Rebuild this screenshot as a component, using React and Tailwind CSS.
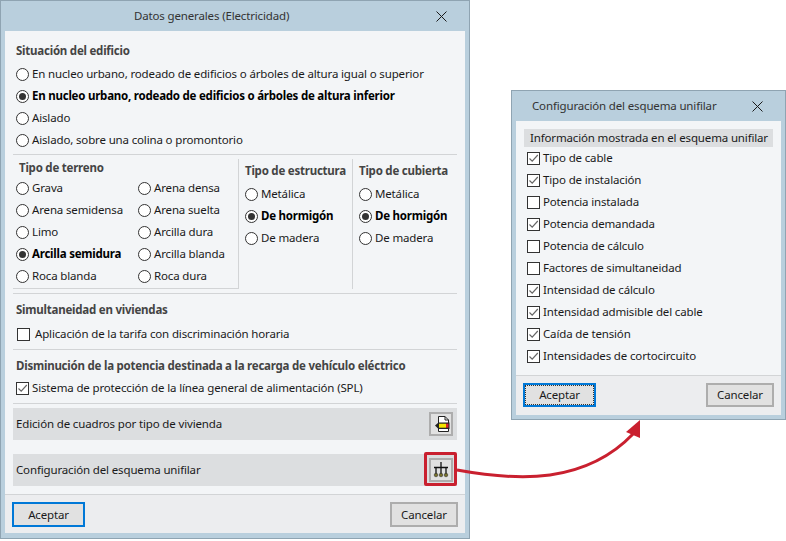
import React from 'react';

const font = { fontFamily: '"Noto Sans", sans-serif' };

function CloseIcon() {
  return (
    <svg width="11" height="11" viewBox="0 0 11 11" className="shrink-0">
      <path d="M0.5 0.5L10.5 10.5M10.5 0.5L0.5 10.5" stroke="#1a1a1a" strokeWidth="1" fill="none" />
    </svg>
  );
}

function Radio({ label, checked = false, className = '' }) {
  return (
    <div className={`flex h-[22px] items-center ${className}`}>
      <span className="flex h-[13px] w-[13px] shrink-0 items-center justify-center rounded-full border border-[#333333] bg-white">
        {checked && <span className="h-[7px] w-[7px] rounded-full bg-[#333333]" />}
      </span>
      <span className={`ml-[3px] whitespace-nowrap ${checked ? 'font-bold tracking-[-0.23px] text-black' : ''}`}>{label}</span>
    </div>
  );
}

function Check({ label, checked = false, textGap = 'ml-[3px]', className = '' }) {
  return (
    <div className={`flex h-[22px] items-center ${className}`}>
      <span className="flex h-[13px] w-[13px] shrink-0 items-center justify-center border border-[#333333] bg-white">
        {checked && (
          <svg width="11" height="11" viewBox="0 0 11 11">
            <path d="M1.5 5.5L4.2 8.2L9.8 2" stroke="#666666" strokeWidth="1.2" fill="none" />
          </svg>
        )}
      </span>
      <span className={`${textGap} whitespace-nowrap`}>{label}</span>
    </div>
  );
}

function Heading({ children, className = '' }) {
  return <div className={`flex items-center whitespace-nowrap font-bold tracking-[-0.23px] text-[#444444] ${className}`}>{children}</div>;
}

function Separator({ className = '' }) {
  return <div className={`h-px w-[444px] shrink-0 bg-[#d2d4d6] ${className}`} />;
}

function DialogButton({ label, focused = false, dotted = false, className = '' }) {
  return (
    <button className={`flex items-center justify-center border-2 bg-[#e1e1e1] ${focused ? 'border-[#0078d7]' : 'border-[#adadad]'} ${className}`}>
      <span className={`flex h-full w-full items-center justify-center ${dotted ? 'border border-dotted border-[#333333]' : ''}`}>{label}</span>
    </button>
  );
}

function DocIcon() {
  return (
    <svg width="18" height="18" viewBox="0 0 18 18">
      <path d="M6.5 1.5H13L16.5 5V16.5H6.5Z" fill="#ffffff" stroke="#222222" strokeWidth="1" />
      <path d="M13 1.5V5H16.5" fill="none" stroke="#222222" strokeWidth="1" />
      <path d="M3 10.5L6.5 7.5H17.5V14H6.5Z" fill="#222222" />
      <rect x="7" y="8.7" width="7" height="4" fill="#f5e400" />
      <rect x="14" y="8.7" width="2.5" height="4" fill="#d8232a" />
    </svg>
  );
}

function TreeIcon() {
  return (
    <svg width="18" height="18" viewBox="0 0 18 18">
      <path d="M9 1V7M2 6.5H16M4 6V13M9 6V13M14 6V13" stroke="#111111" strokeWidth="1.3" fill="none" />
      <circle cx="4" cy="14" r="1.8" fill="#77702a" stroke="#222222" strokeWidth="0.5" />
      <circle cx="9" cy="14" r="1.8" fill="#77702a" stroke="#222222" strokeWidth="0.5" />
      <circle cx="14" cy="14" r="1.8" fill="#77702a" stroke="#222222" strokeWidth="0.5" />
    </svg>
  );
}

function IconButton({ children }) {
  return (
    <div className="flex h-6 w-6 items-center justify-center border-2 border-[#adadad] bg-[#e1e1e1]">{children}</div>
  );
}

const terrain = [
  ['Grava', 'Arena densa'],
  ['Arena semidensa', 'Arena suelta'],
  ['Limo', 'Arcilla dura'],
  ['Arcilla semidura', 'Arcilla blanda'],
  ['Roca blanda', 'Roca dura'],
];

const schemaOptions = [
  ['Tipo de cable', true],
  ['Tipo de instalación', true],
  ['Potencia instalada', false],
  ['Potencia demandada', true],
  ['Potencia de cálculo', false],
  ['Factores de simultaneidad', false],
  ['Intensidad de cálculo', true],
  ['Intensidad admisible del cable', true],
  ['Caída de tensión', true],
  ['Intensidades de cortocircuito', true],
];

function MainDialog() {
  return (
    <div className="flex w-[470px] shrink-0 flex-col self-start border border-[#8fa4b2] bg-[#b9cfdd] px-[4px] pb-[5px]">
      <div className="flex h-[30px] items-center justify-between pl-[129px] pr-[18px] text-[#333333]">
        <span>Datos generales (Electricidad)</span>
        <CloseIcon />
      </div>
      <div className="flex h-[502px] flex-col bg-[#f3f5f7]">
        <div className="flex flex-1 flex-col pl-[8px]">
          <Heading className="mt-[9px] h-[22px] pl-[3px]">Situación del edificio</Heading>
          <div className="mt-px flex flex-col pl-[3px]">
            <Radio label="En nucleo urbano, rodeado de edificios o árboles de altura igual o superior" />
            <Radio label="En nucleo urbano, rodeado de edificios o árboles de altura inferior" checked />
            <Radio label="Aislado" />
            <Radio label="Aislado, sobre una colina o promontorio" />
          </div>
          <Separator className="mt-[3px]" />

          <div className="flex h-[138px] items-start pt-[4px]">
            <div className="h-[130px] w-[226px] border-r border-[#d2d4d6]">
              <div className="h-full border-b border-[#d2d4d6] pl-[3px]">
                <Heading className="h-[18px] pl-[3px]">Tipo de terreno</Heading>
                {terrain.map(([left, right]) => (
                  <div key={left} className="grid grid-cols-[122px_1fr]">
                    <Radio label={left} checked={left === 'Arcilla semidura'} />
                    <Radio label={right} />
                  </div>
                ))}
              </div>
            </div>
            <div className="h-[130px] w-[114px] border-r border-[#d2d4d6] pl-[6px]">
              <Heading className="h-6">Tipo de estructura</Heading>
              <Radio label="Metálica" />
              <Radio label="De hormigón" checked />
              <Radio label="De madera" />
            </div>
            <div className="h-[130px] pl-[6px]">
              <Heading className="h-6">Tipo de cubierta</Heading>
              <Radio label="Metálica" />
              <Radio label="De hormigón" checked />
              <Radio label="De madera" />
            </div>
          </div>

          <Separator />
          <Heading className="mt-[5px] h-[22px] pl-[3px]">Simultaneidad en viviendas</Heading>
          <Check label="Aplicación de la tarifa con discriminación horaria" textGap="ml-[5px]" className="mt-[2px] pl-[4px]" />
          <Separator className="mt-[4px]" />
          <Heading className="mt-[5px] h-[22px] pl-[3px]">Disminución de la potencia destinada a la recarga de vehículo eléctrico</Heading>
          <Check label="Sistema de protección de la línea general de alimentación (SPL)" checked className="pl-[3px]" />
          <Separator className="mt-[4px]" />

          <div className="mt-[4px] flex h-8 w-[444px] items-center justify-between bg-[#dcdee0] pl-[3px] pr-[4px]">
            <span>Edición de cuadros por tipo de vivienda</span>
            <IconButton><DocIcon /></IconButton>
          </div>
          <div className="mt-[14px] flex h-8 w-[444px] items-center justify-between bg-[#dcdee0] pl-[3px] pr-[4px]">
            <span>Configuración del esquema unifilar</span>
            <div className="relative">
              <IconButton><TreeIcon /></IconButton>
              <div className="absolute -bottom-[4px] -left-[5px] -right-[4px] -top-[6px] rounded-[2px] border-[3px] border-[#c9202f]" />
            </div>
          </div>
        </div>
        <div className="flex h-[39px] items-start justify-between border-t border-[#d2d4d6] bg-[#ecedef] px-[7px] pt-[7px]">
          <DialogButton label="Aceptar" focused className="h-[25px] w-[73px]" />
          <DialogButton label="Cancelar" className="h-[25px] w-[68px]" />
        </div>
      </div>
    </div>
  );
}

function SchemaDialog() {
  return (
    <div className="ml-[41px] mt-[90px] flex w-[275px] shrink-0 flex-col self-start border border-[#8fa4b2] bg-[#b9cfdd] px-[4px] pb-[4px]">
      <div className="flex h-[30px] items-center justify-between pl-[16px] pr-[18px] text-[#333333]">
        <span>Configuración del esquema unifilar</span>
        <CloseIcon />
      </div>
      <div className="flex flex-col bg-[#f3f5f7]">
        <div className="flex flex-col pl-[8px] pt-[8px]">
          <div className="flex h-[18px] w-[249px] items-center whitespace-nowrap bg-[#dcdee0] pl-[6px]">Información mostrada en el esquema unifilar</div>
          <div className="flex flex-col pl-[3px]">
            {schemaOptions.map(([label, checked]) => (
              <Check key={label} label={label} checked={checked} />
            ))}
          </div>
        </div>
        <div className="mt-[8px] flex h-[40px] items-start justify-between border-t border-[#d2d4d6] bg-[#ecedef] px-[7px] pt-[7px]">
          <DialogButton label="Aceptar" focused dotted className="h-6 w-[73px]" />
          <DialogButton label="Cancelar" className="h-6 w-[68px]" />
        </div>
      </div>
    </div>
  );
}

export default function App() {
  return (
    <div className="relative flex h-[541px] w-[786px] overflow-hidden bg-white text-[11.5px] leading-none tracking-[-0.15px] text-[#1a1a1a]" style={font}>
      <MainDialog />
      <SchemaDialog />
      {/* arrow between the two dialogs */}
      <svg className="pointer-events-none absolute left-0 top-0" width="786" height="541" viewBox="0 0 786 541">
        <path d="M457 470C490 476 520 479 550 475C585 470 612 456 633 434" stroke="#c9202f" strokeWidth="3" fill="none" />
        <path d="M640 420L626 432L640 438Z" fill="#c9202f" />
      </svg>
    </div>
  );
}
